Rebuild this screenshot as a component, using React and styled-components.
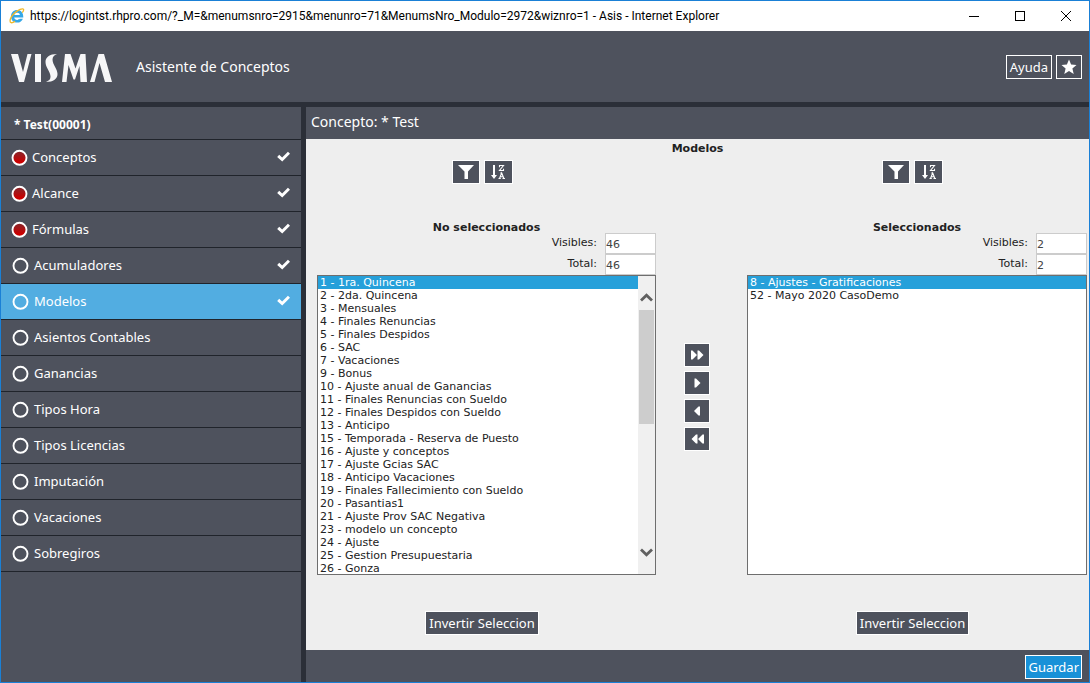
import React from "react";
import styled, { createGlobalStyle } from "styled-components";

const ui = `"Noto Sans", "Open Sans", sans-serif`;
const body = `"DejaVu Sans", sans-serif`;

const GlobalStyle = createGlobalStyle`
  * { box-sizing: border-box; }
  body { margin: 0; font-family: ${body}; font-size: 11px; color: #222; }
  button, input, select { font: inherit; margin: 0; }
  h1, h2, h3, ul { margin: 0; padding: 0; }
`;

const Window = styled.div`
  display: flex;
  flex-direction: column;
  min-height: 100vh;
  border: 1px solid #1a80d6;
  background: #2b2f38;
`;

const TitleBar = styled.div`
  display: flex;
  align-items: center;
  height: 30px;
  padding-left: 8px;
  gap: 5px;
  background: #fff;
  color: #000;
  font-family: Roboto, sans-serif;
  font-size: 12px;
`;

const TitleText = styled.span`
  flex: 1;
  white-space: nowrap;
`;

const WindowControls = styled.div`
  display: flex;
`;

const WindowControl = styled.button`
  display: flex;
  align-items: center;
  justify-content: center;
  width: 46px;
  height: 28px;
  padding: 0;
  border: 0;
  background: none;
`;

const Header = styled.header`
  display: flex;
  align-items: center;
  height: 71px;
  padding: 0 7px 0 10px;
  background: #4e525d;
  color: #fff;
  font-family: ${ui};
`;

const AppTitle = styled.h1`
  flex: 1;
  margin-left: 24px;
  font-size: 14px;
  font-weight: 400;
`;

const Button = styled.button`
  display: flex;
  align-items: center;
  justify-content: center;
  height: 24px;
  width: ${(p) => (p.$width ? `${p.$width}px` : "auto")};
  padding: 0 ${(p) => (p.$primary ? "2px" : "3px")};
  border: 1px solid #fff;
  background: ${(p) => (p.$primary ? "#1891d8" : "#4e525d")};
  color: #fff;
  font-family: ${ui};
  font-size: 13px;
  line-height: 16px;
  white-space: nowrap;
`;

const HeaderActions = styled.div`
  display: flex;
  gap: 4px;
`;

const Body = styled.div`
  display: flex;
  flex: 1;
  gap: 5px;
  margin-top: 5px;
`;

const Sidebar = styled.nav`
  width: 300px;
  flex: none;
  background: #4e525d;
  color: #fff;
  font-family: ${ui};
`;

const SidebarTitle = styled.h2`
  height: 33px;
  padding: 3px 13px 0;
  border-bottom: 1px solid #20242b;
  font-size: 12px;
  font-weight: 700;
  line-height: 30px;
`;

const StepList = styled.ul`
  list-style: none;
`;

const Step = styled.a`
  display: flex;
  align-items: center;
  height: 36px;
  padding: 0 11px 0 ${(p) => (p.$required ? "10px" : "11px")};
  gap: ${(p) => (p.$required ? "4px" : "5px")};
  border-bottom: 1px solid #20242b;
  background: ${(p) => (p.$active ? "#52ade1" : "transparent")};
  color: #fff;
  font-size: 13px;
  text-decoration: none;
`;

const StepLabel = styled.span`
  flex: 1;
  padding-bottom: 2px;
`;

const StepDone = styled.span`
  display: flex;
  padding-bottom: 2px;
`;

const Main = styled.main`
  display: flex;
  flex: 1;
  flex-direction: column;
  min-width: 0;
  background: #eee;
`;

const MainTitle = styled.h2`
  height: 32px;
  padding: 0 5px;
  background: #4e525d;
  color: #fff;
  font-family: ${ui};
  font-size: 14px;
  font-weight: 400;
  line-height: 30px;
`;

const Content = styled.section`
  flex: 1;
  padding: 0 2px;
`;

const SectionTitle = styled.h3`
  font-size: 11px;
  line-height: 20px;
  text-align: center;
`;

const Columns = styled.div`
  display: grid;
  grid-template-columns: 348fr 82px 349fr;
`;

const Column = styled.div`
  display: flex;
  flex-direction: column;
  align-items: center;
  padding-top: 1px;
`;

const Tools = styled.div`
  display: flex;
  gap: 4px;
`;

const ListBlock = styled.div`
  align-self: stretch;
  margin: 36px 0 36px 9px;
`;

const ListTitle = styled.h3`
  height: 13px;
  font-size: 11px;
  line-height: 15px;
  text-align: center;
`;

const CountRow = styled.label`
  display: flex;
  justify-content: flex-end;
  gap: 8px;
  height: 21px;
  line-height: 20px;
`;

const CountInput = styled.input`
  width: 51px;
  height: 21px;
  padding: 2px 0 0;
  border: 1px solid #ccc;
  border-radius: 0;
  background: #fff;
  color: #444;
`;

const ListFrame = styled.div`
  display: flex;
  height: 300px;
  border: 1px solid #6e6e6e;
  background: #fff;
`;

const ListBox = styled.select`
  flex: 1;
  min-width: 0;
  height: 298px;
  padding: 0;
  border: 0;
  border-radius: 0;
  outline: 0;
  background: #fff;
  color: #222;
  scrollbar-width: none;

  option {
    min-height: 13px;
    height: 13px;
    padding: 0 2px;
    line-height: 15px;
  }
  option:checked {
    background: #26a0da linear-gradient(#26a0da, #26a0da);
    color: #fff;
    -webkit-text-fill-color: #fff;
  }
`;

const ScrollBar = styled.div`
  display: flex;
  flex-direction: column;
  align-items: center;
  width: 17px;
  padding: 17px 0;
  background: #f0f0f0;
`;

const ScrollThumb = styled.div`
  width: 15px;
  height: 114px;
  margin: 8px 0 auto;
  background: #cdcdcd;
`;

const MoveButtons = styled.div`
  display: flex;
  flex-direction: column;
  align-items: center;
  gap: 4px;
  padding-top: 184px;
`;

const Footer = styled.footer`
  display: flex;
  justify-content: flex-end;
  height: 32px;
  padding: 5px 7px 3px;
  background: #4e525d;
`;

const steps = [
  { label: "Conceptos", required: true, done: true },
  { label: "Alcance", required: true, done: true },
  { label: "Fórmulas", required: true, done: true },
  { label: "Acumuladores", done: true },
  { label: "Modelos", done: true, active: true },
  { label: "Asientos Contables" },
  { label: "Ganancias" },
  { label: "Tipos Hora" },
  { label: "Tipos Licencias" },
  { label: "Imputación" },
  { label: "Vacaciones" },
  { label: "Sobregiros" },
];

const available = [
  "1 - 1ra. Quincena", "2 - 2da. Quincena", "3 - Mensuales", "4 - Finales Renuncias",
  "5 - Finales Despidos", "6 - SAC", "7 - Vacaciones", "9 - Bonus",
  "10 - Ajuste anual de Ganancias", "11 - Finales Renuncias con Sueldo",
  "12 - Finales Despidos con Sueldo", "13 - Anticipo", "15 - Temporada - Reserva de Puesto",
  "16 - Ajuste y conceptos", "17 - Ajuste Gcias SAC", "18 - Anticipo Vacaciones",
  "19 - Finales Fallecimiento con Sueldo", "20 - Pasantias1", "21 - Ajuste Prov SAC Negativa",
  "23 - modelo un concepto", "24 - Ajuste", "25 - Gestion Presupuestaria", "26 - Gonza",
];

const selected = ["8 - Ajustes - Gratificaciones", "52 - Mayo 2020 CasoDemo"];

const BrowserIcon = () => (
  <svg width="16" height="16" viewBox="0 0 16 16" aria-hidden="true">
    <path d="M14.300 9.400H5.200c.2 1.600 1.400 2.500 3 2.500 1.200 0 2-.4 2.500-1.200h3.200c-.8 2.400-2.900 3.900-5.700 3.900-3.700 0-6.200-2.600-6.200-6.200s2.600-6.300 6.200-6.300c3.800 0 6.200 2.700 6.100 7.300zM5.300 7h5.600c-.2-1.500-1.200-2.300-2.700-2.300S5.500 5.500 5.300 7z" fill="#35a7e6" />
    <path d="M13.200 4.600c1.800-2 1.900-3.700.4-3.800C11 .7 5 4.300 2.300 8.900.8 11.700.6 14.400 2.100 14.700c1.100.2 2.800-.6 4-1.500" fill="none" stroke="#f2b928" strokeWidth="1.300" />
  </svg>
);

const Logo = () => (
  <svg width="101" height="30" viewBox="0 -2 101 30" fill="#f7f7f8" role="img" aria-label="VISMA">
    <path d="M0 0h7l5 18L16.500 0h4L13 28H8zM24 0h6v28h-6z" />
    <path d="M46 0c-3 1-4.500 3-4.500 5.500 0 5 5 9.500 5 14.500 0 4.500-4 8-11.500 8 3.500-1.500 4.500-3 4.500-5.500 0-5-5-9-5-14.500C34.500 3.500 38.500 0 46 0z" />
    <path d="M54 0h5.500L64.500 14.500 69.500 0h5L76 28h-6.500L68.500 12 64 25.500h-1.500L57.500 11 55.500 28H51zM87.500 0H93l8 28h-7L88.500 9 83.500 28H79z" />
  </svg>
);

const StarIcon = () => (
  <svg width="16" height="16" viewBox="0 0 16 16" fill="#fff" aria-hidden="true">
    <path d="M8 0.500l2.100 5.100 5.400.4-4.100 3.500 1.300 5.400L8 12l-4.700 2.900 1.300-5.400L.5 6l5.400-.4z" />
  </svg>
);

const StatusDot = ({ required }) => (
  <svg width="17" height="17" viewBox="0 0 17 17" aria-hidden="true">
    <defs>
      <linearGradient id="required-fill" x1="0" y1="0" x2="0" y2="1">
        <stop offset="0.1" stopColor="#8b2428" />
        <stop offset="0.8" stopColor="#cc0000" />
      </linearGradient>
    </defs>
    <circle cx="8.500" cy="8.800" r="7" fill={required ? "url(#required-fill)" : "none"} stroke="#fff" strokeWidth="1.900" />
  </svg>
);

const CheckIcon = () => (
  <svg width="13" height="11" viewBox="0 0 13 11" aria-hidden="true">
    <path d="M1.200 4.800l4 3.700 6.800-6.800" fill="none" stroke="#fff" strokeWidth="3" />
  </svg>
);

const FilterIcon = () => (
  <svg width="16" height="16" viewBox="0 0 16 16" fill="#fff" aria-hidden="true">
    <path d="M0 1h16l-6 6.500V15H6.500V7.500z" />
  </svg>
);

const SortIcon = () => (
  <svg width="14" height="16" viewBox="0 0 14 16" fill="none" stroke="#fff" aria-hidden="true">
    <path d="M3 1v12" strokeWidth="2" />
    <path d="M0 11h6l-3 4z" fill="#fff" stroke="none" />
    <path d="M8.500 3.200V1.500h4L8.500 6.500h4V4.800" strokeWidth="1.100" />
    <path d="M8.500 14.500l2.200-5.500 2.200 5.500M9 12.700h3.500M7.500 14.500h2.300M11.500 14.500H14M9.300 9h1.500" strokeWidth="1.100" />
  </svg>
);

const arrowPaths = {
  allRight: "M0 1.500h1.500L6 6 1.500 10.500H0zM6.500 1.500H8L12.500 6 8 10.500H6.500z",
  right: "M3.500 1.500H5L9.500 6 5 10.500H3.500z",
  left: "M9 1.500H7.500L3 6l4.500 4.500H9z",
  allLeft: "M6.500 1.500H5L.5 6 5 10.500h1.500zM13 1.500h-1.500L7 6l4.500 4.500H13z",
};

const ArrowIcon = ({ kind }) => (
  <svg width="13" height="12" viewBox="0 0 13 12" fill="#fff" aria-hidden="true">
    <path d={arrowPaths[kind]} />
  </svg>
);

const ScrollArrow = ({ down }) => (
  <svg width="13" height="9" viewBox="0 0 13 9" aria-hidden="true">
    <path d={down ? "M1 1.500l5.500 5.200L12 1.500" : "M1 7.500l5.500-5.200L12 7.500"} fill="none" stroke="#606060" strokeWidth="2.800" />
  </svg>
);

function DualColumn({ title, count, options, scroll }) {
  return (
    <Column>
      <Tools>
        <Button $width={28} aria-label="Filtrar"><FilterIcon /></Button>
        <Button $width={29} aria-label="Ordenar"><SortIcon /></Button>
      </Tools>
      <ListBlock>
        <ListTitle>{title}</ListTitle>
        <CountRow>Visibles: <CountInput readOnly value={count} /></CountRow>
        <CountRow>Total: <CountInput readOnly value={count} /></CountRow>
        <ListFrame>
          <ListBox multiple size={22} aria-label={title} defaultValue={[options[0]]}>
            {options.map((o) => <option key={o} value={o}>{o}</option>)}
          </ListBox>
          {scroll && (
            <ScrollBar aria-hidden="true">
              <ScrollArrow />
              <ScrollThumb />
              <ScrollArrow down />
            </ScrollBar>
          )}
        </ListFrame>
      </ListBlock>
      <Button>Invertir Seleccion</Button>
    </Column>
  );
}

export default function App() {
  return (
    <>
      <GlobalStyle />
      <Window>
        <TitleBar>
          <BrowserIcon />
          <TitleText>
            https://logintst.rhpro.com/?_M=&amp;menumsnro=2915&amp;menunro=71&amp;MenumsNro_Modulo=2972&amp;wiznro=1 - Asis - Internet Explorer
          </TitleText>
          <WindowControls>
            <WindowControl aria-label="Minimizar">
              <svg width="10" height="10"><path d="M0 5.500h10" stroke="#000" /></svg>
            </WindowControl>
            <WindowControl aria-label="Maximizar">
              <svg width="10" height="10"><rect x="0.500" y="0.500" width="9" height="9" fill="none" stroke="#000" /></svg>
            </WindowControl>
            <WindowControl aria-label="Cerrar">
              <svg width="10" height="10"><path d="M0 0l10 10M10 0L0 10" stroke="#000" /></svg>
            </WindowControl>
          </WindowControls>
        </TitleBar>
        <Header>
          <Logo />
          <AppTitle>Asistente de Conceptos</AppTitle>
          <HeaderActions>
            <Button>Ayuda</Button>
            <Button $width={26} aria-label="Favorito"><StarIcon /></Button>
          </HeaderActions>
        </Header>
        <Body>
          <Sidebar>
            <SidebarTitle>* Test(00001)</SidebarTitle>
            <StepList>
              {steps.map((s) => (
                <li key={s.label}>
                  <Step href="#" $required={s.required} $active={s.active}>
                    <StatusDot required={s.required} />
                    <StepLabel>{s.label}</StepLabel>
                    {s.done && <StepDone><CheckIcon /></StepDone>}
                  </Step>
                </li>
              ))}
            </StepList>
          </Sidebar>
          <Main>
            <MainTitle>Concepto: * Test</MainTitle>
            <Content>
              <SectionTitle>Modelos</SectionTitle>
              <Columns>
                <DualColumn title="No seleccionados" count="46" options={available} scroll />
                <MoveButtons>
                  <Button $width={26} aria-label="Agregar todos"><ArrowIcon kind="allRight" /></Button>
                  <Button $width={26} aria-label="Agregar"><ArrowIcon kind="right" /></Button>
                  <Button $width={26} aria-label="Quitar"><ArrowIcon kind="left" /></Button>
                  <Button $width={26} aria-label="Quitar todos"><ArrowIcon kind="allLeft" /></Button>
                </MoveButtons>
                <DualColumn title="Seleccionados" count="2" options={selected} />
              </Columns>
            </Content>
            <Footer>
              <Button $primary>Guardar</Button>
            </Footer>
          </Main>
        </Body>
      </Window>
    </>
  );
}
